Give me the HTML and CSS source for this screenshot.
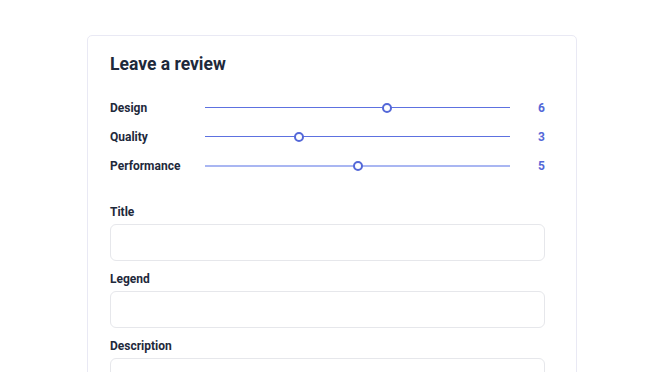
FILE: index.html
```html
<!DOCTYPE html>
<html lang="en">
<head>
    <meta charset="UTF-8">
    <meta name="viewport" content="width=device-width, initial-scale=1.0">
    <title>Leave a review</title>
    <link rel="stylesheet" href="styles.css">
</head>
<body>
    <!-- Review form -->
    <div class="review-card">
        <h2>Leave a review</h2>

        <div class="ratings">
            <div class="rating-row">
                <label class="rating-label" for="design">Design</label>
                <input class="rating-slider" type="range" id="design" min="0" max="10" value="6">
                <span class="rating-value">6</span>
            </div>
            <div class="rating-row">
                <label class="rating-label" for="quality">Quality</label>
                <input class="rating-slider" type="range" id="quality" min="0" max="10" value="3">
                <span class="rating-value">3</span>
            </div>
            <div class="rating-row">
                <label class="rating-label" for="performance">Performance</label>
                <input class="rating-slider rating-slider--active" type="range" id="performance" min="0" max="10" value="5">
                <span class="rating-value">5</span>
            </div>
        </div>

        <div class="field">
            <label class="field-label" for="title">Title</label>
            <input class="field-input" type="text" id="title">
        </div>
        <div class="field">
            <label class="field-label" for="legend">Legend</label>
            <input class="field-input" type="text" id="legend">
        </div>
        <div class="field">
            <label class="field-label" for="description">Description</label>
            <input class="field-input" type="text" id="description">
        </div>
    </div>
</body>
</html>
```

FILE: styles.css
```css
:root {
    --text: #1e293b;
    --accent: #5468d8;
    --track: #5d71e0;
    --track-light: #a9b6f2;
    --card-border: #e9e9f4;
    --input-border: #e6e7eb;
}

* {
    margin: 0;
    padding: 0;
    box-sizing: border-box;
}

body {
    font-family: Roboto, "Liberation Sans", sans-serif;
    background: #fff;
    color: var(--text);
    padding: 35px 0 0 87px;
}

.review-card {
    width: 490px;
    border: 1px solid var(--card-border);
    border-radius: 5px;
    padding: 16px 31px 30px 22px;
}

.review-card h2 {
    font-size: 17.5px;
    line-height: 24px;
    font-weight: 700;
    margin-bottom: 17px;
}

.ratings {
    margin-bottom: 24px;
}

.rating-row {
    display: flex;
    align-items: center;
    height: 29px;
}

.rating-label {
    width: 95px;
    font-size: 12px;
    font-weight: 700;
}

.rating-slider {
    flex: 1;
    -webkit-appearance: none;
    appearance: none;
    background: transparent;
    height: 12px;
    margin: 0;
}

.rating-slider::-webkit-slider-runnable-track {
    height: 1px;
    background: var(--track);
}

.rating-slider::-webkit-slider-thumb {
    -webkit-appearance: none;
    width: 10px;
    height: 10px;
    margin-top: -4.5px;
    border-radius: 50%;
    border: 2px solid var(--accent);
    background: #fff;
}

.rating-slider--active::-webkit-slider-runnable-track {
    height: 2px;
    background: var(--track-light);
}

.rating-slider--active::-webkit-slider-thumb {
    margin-top: -4px;
}

.rating-slider::-moz-range-track {
    height: 1px;
    background: var(--track);
}

.rating-slider::-moz-range-thumb {
    width: 6px;
    height: 6px;
    border-radius: 50%;
    border: 2px solid var(--accent);
    background: #fff;
}

.rating-value {
    width: 35px;
    text-align: right;
    font-size: 12px;
    font-weight: 700;
    color: var(--accent);
}

.field {
    margin-bottom: 10px;
}

.field-label {
    display: block;
    font-size: 12px;
    line-height: 16px;
    font-weight: 700;
    margin-bottom: 4px;
}

.field-input {
    display: block;
    width: 100%;
    height: 37px;
    border: 1px solid var(--input-border);
    border-radius: 6px;
    padding: 0 10px;
    font: inherit;
    outline: none;
}
```
